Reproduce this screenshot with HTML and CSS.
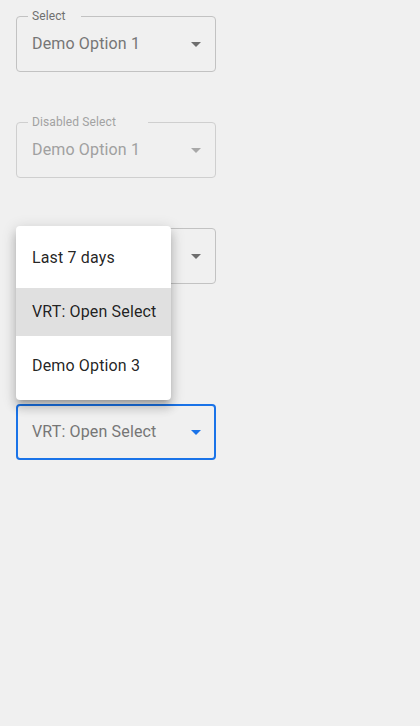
FILE: index.html
```html
<!DOCTYPE html>
<html lang="en">
<head>
<meta charset="utf-8">
<title>Select demo</title>
<link rel="stylesheet" href="styles.css">
</head>
<body>
<main class="page">
  <div class="field">
    <span class="label"><span class="label-text">Select</span></span>
    <span class="value">Demo Option 1</span>
    <svg class="arrow" viewBox="0 0 24 24" width="24" height="24"><path d="M7 10l5 5 5-5z"/></svg>
  </div>

  <div class="field disabled">
    <span class="label"><span class="label-text">Disabled Select</span></span>
    <span class="value">Demo Option 1</span>
    <svg class="arrow" viewBox="0 0 24 24" width="24" height="24"><path d="M7 10l5 5 5-5z"/></svg>
  </div>

  <div class="field">
    <span class="value"></span>
    <svg class="arrow" viewBox="0 0 24 24" width="24" height="24"><path d="M7 10l5 5 5-5z"/></svg>
  </div>

  <div class="field focused gap-large">
    <span class="value">VRT: Open Select</span>
    <svg class="arrow" viewBox="0 0 24 24" width="24" height="24"><path d="M7 10l5 5 5-5z"/></svg>
  </div>

  <ul class="menu">
    <li class="menu-item">Last 7 days</li>
    <li class="menu-item selected">VRT: Open Select</li>
    <li class="menu-item">Demo Option 3</li>
  </ul>
</main>
</body>
</html>
```

FILE: styles.css
```css
html, body {
  margin: 0;
  padding: 0;
  background: #f0f0f0;
}

body {
  font-family: Roboto, "Liberation Sans", Arial, sans-serif;
  letter-spacing: 0.15px;
  width: 420px;
  height: 726px;
  overflow: hidden;
}

.page {
  position: relative;
  display: flex;
  flex-direction: column;
  align-items: flex-start;
  gap: 50px;
  padding: 16px;
}

.field {
  position: relative;
  box-sizing: border-box;
  width: 200px;
  height: 56px;
  border: 1px solid #c2c2c2;
  border-radius: 4px;
  display: flex;
  align-items: center;
  padding: 0 7px 0 15px;
}

.field.gap-large {
  margin-top: 70px;
}

.label {
  position: absolute;
  top: -9px;
  left: 11px;
  height: 16px;
  line-height: 16px;
  padding: 0 4px;
  background: #f0f0f0;
  font-size: 16px;
  white-space: nowrap;
  color: transparent;
}

.label-text {
  display: inline-block;
  transform: scale(0.75);
  transform-origin: left center;
  color: #6f6f6f;
}

.value {
  flex: 1;
  font-size: 16px;
  line-height: 24px;
  color: #767676;
  white-space: nowrap;
}

.arrow {
  flex: none;
  fill: #6e6e6e;
}

.disabled {
  border-color: #cfcfcf;
}

.disabled .label-text {
  color: #a2a2a2;
}

.disabled .value {
  color: #a0a0a0;
}

.disabled .arrow {
  fill: #a8a8a8;
}

.focused {
  border: 2px solid #1a73e8;
  padding: 0 6px 0 14px;
}

.focused .arrow {
  fill: #1a73e8;
}

.menu {
  position: absolute;
  top: 226px;
  left: 16px;
  width: 155px;
  margin: 0;
  padding: 8px 0 10px;
  list-style: none;
  background: #ffffff;
  border-radius: 4px;
  box-shadow: 0 5px 5px -3px rgba(0,0,0,0.2), 0 8px 10px 1px rgba(0,0,0,0.14), 0 3px 14px 2px rgba(0,0,0,0.12);
  display: flex;
  flex-direction: column;
  gap: 6px;
}

.menu-item {
  height: 48px;
  line-height: 48px;
  padding: 0 16px;
  font-size: 16px;
  color: rgba(0,0,0,0.87);
  white-space: nowrap;
}

.menu-item.selected {
  background: #e0e0e0;
}
```
